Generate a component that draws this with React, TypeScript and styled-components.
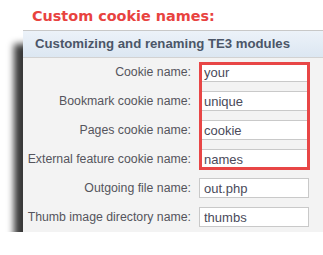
import React from "react";
import styled, { createGlobalStyle } from "styled-components";

const Global = createGlobalStyle`
  html {
    margin: 0;
    padding: 0;
    background: #ffffff;
    overflow: hidden;
  }
  body {
    margin: 0;
    padding: 0;
    overflow: hidden;
    font-family: "Liberation Sans", Arial, sans-serif;
  }
`;

const Page = styled.div`
  padding: 8px 0 0 23px;
  width: 300px;
`;

const Title = styled.h1`
  margin: 0 0 5px 0;
  padding-left: 9px;
  font-family: "DejaVu Sans", Verdana, sans-serif;
  font-weight: bold;
  font-size: 14.4px;
  line-height: 17px;
  color: #e8433f;
`;

const Panel = styled.section`
  position: relative;
  width: 300px;
  background: #f3f3f3;

  &::before {
    content: "";
    position: absolute;
    left: -9px;
    top: 14px;
    right: 20px;
    bottom: -9px;
    background: rgba(0, 0, 0, 0.78);
    filter: blur(3.5px);
    z-index: -1;
  }
`;

const Header = styled.div`
  box-sizing: border-box;
  height: 28px;
  border-top: 1px solid #c8c8c8;
  border-bottom: 1px solid #d2d2d2;
  background: linear-gradient(#ecf2f9, #dce7f2);
  padding-left: 12px;
  font-family: "Liberation Sans", Arial, sans-serif;
  font-weight: bold;
  font-size: 13.2px;
  line-height: 26px;
  color: #4b5668;
  white-space: nowrap;
`;

const Form = styled.div`
  display: grid;
  grid-template-columns: 168px 110px;
  grid-auto-rows: 20px;
  column-gap: 8px;
  row-gap: 9px;
  padding: 4px 0 5px 0;
`;

const Label = styled.label<{ $row: number }>`
  grid-column: 1;
  grid-row: ${(p) => p.$row};
  text-align: right;
  align-self: center;
  font-size: 12.3px;
  line-height: 14px;
  color: #55555d;
  white-space: nowrap;
`;

const Field = styled.input<{ $row: number }>`
  grid-column: 2;
  grid-row: ${(p) => p.$row};
  box-sizing: border-box;
  width: 110px;
  height: 20px;
  margin: 0;
  padding: 0 4px;
  border: 1px solid #c9c9c9;
  background: #ffffff;
  font-family: "Liberation Sans", Arial, sans-serif;
  font-size: 13px;
  color: #4a4a5a;
  outline: none;
`;

const Highlight = styled.div`
  grid-column: 2;
  grid-row: 1 / 5;
  margin-right: -1px;
  margin-bottom: -1px;
  border: 3px solid #e84646;
  pointer-events: none;
  z-index: 1;
`;

const rows = [
  { label: "Cookie name:", value: "your" },
  { label: "Bookmark cookie name:", value: "unique" },
  { label: "Pages cookie name:", value: "cookie" },
  { label: "External feature cookie name:", value: "names" },
  { label: "Outgoing file name:", value: "out.php" },
  { label: "Thumb image directory name:", value: "thumbs" },
];

export default function App() {
  return (
    <Page>
      <Global />
      <Title>Custom cookie names:</Title>
      <Panel>
        <Header>Customizing and renaming TE3 modules</Header>
        <Form>
          {rows.map((r, i) => (
            <React.Fragment key={r.label}>
              <Label $row={i + 1}>{r.label}</Label>
              <Field $row={i + 1} readOnly value={r.value} />
            </React.Fragment>
          ))}
          <Highlight />
        </Form>
      </Panel>
    </Page>
  );
}
